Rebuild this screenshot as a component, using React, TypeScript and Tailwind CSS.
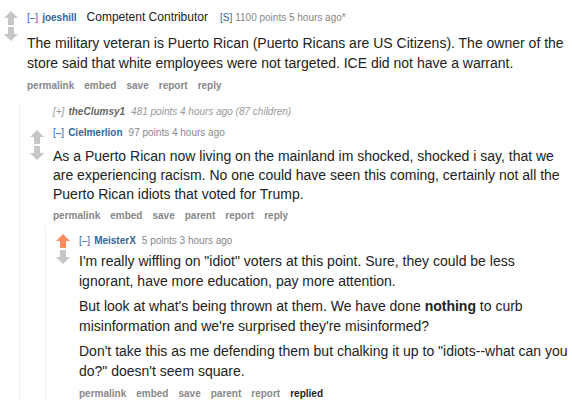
import React from "react";

const sans = "font-['Liberation_Sans',Arial,Helvetica,sans-serif]";

function Arrow({ down, color }: { down?: boolean; color: string }) {
  return (
    <svg width="14" height="14" viewBox="0 0 14 14" className="block">
      {down ? (
        <polygon points="4,0 10,0 10,7 14,7 7,14 0,7 4,7" fill={color} />
      ) : (
        <polygon points="7,0 14,7 10,7 10,14 4,14 4,7 0,7" fill={color} />
      )}
    </svg>
  );
}

function Votes({ upColor = "#c6c6c6", top }: { upColor?: string; top: string }) {
  return (
    <div className={`w-[23px] shrink-0 flex flex-col gap-[2px] ${top}`}>
      <Arrow color={upColor} />
      <Arrow down color="#c6c6c6" />
    </div>
  );
}

function Buttons({ items, replied, mt }: { items: string[]; replied?: boolean; mt: string }) {
  return (
    <ul className={`flex gap-[10px] text-[10px] leading-[14px] font-bold text-[#888] ${mt}`}>
      {items.map((b) => (
        <li key={b}>{b}</li>
      ))}
      {replied && <li className="text-[#222]">replied</li>}
    </ul>
  );
}

export default function App() {
  return (
    <div className={`min-h-screen bg-white text-[#222] ${sans}`}>
      {/* top-level comment */}
      <div className="pl-[4px] pt-[9px]">
        <div className="flex">
          <Votes top="mt-[2px]" />
          <div className="flex-1 pr-[4px]">
            <p className="flex items-baseline text-[10px] leading-[16px] whitespace-nowrap">
              <span className="text-[#369]">[–]</span>
              <span className="ml-[4px] font-bold text-[#369]">joeshill</span>
              <span className="ml-[10px] text-[12px] text-[#222]">Competent Contributor</span>
              <span className="ml-[12px] text-[#369]">[S]</span>
              <span className="ml-[3px] text-[#888]">1100 points 5 hours ago*</span>
            </p>
            <div className="mt-[7px] text-[14px] leading-[20px]">
              <p>
                The military veteran is Puerto Rican (Puerto Ricans are US Citizens). The owner of the store said
                that white employees were not targeted. ICE did not have a warrant.
              </p>
            </div>
            <Buttons items={["permalink", "embed", "save", "report", "reply"]} mt="mt-[6px]" />
          </div>
        </div>

        {/* children */}
        <div className="ml-[15px] mt-[11px] border-l border-dotted border-[#ddf] pl-[10px] pt-[1px]">
          <p className="pl-[23px] text-[10px] leading-[14px] italic text-[#999] whitespace-nowrap">
            <span>[+]</span>
            <span className="ml-[4px] font-bold text-[#666]">theClumsy1</span>
            <span className="ml-[6px]">481 points 4 hours ago (87 children)</span>
          </p>

          <div className="mt-[6px] flex">
            <Votes top="mt-[5px]" />
            <div className="flex-1 pr-[4px]">
              <p className="text-[10px] leading-[16px] whitespace-nowrap">
                <span className="text-[#369]">[–]</span>
                <span className="ml-[4px] font-bold text-[#369]">Cielmerlion</span>
                <span className="ml-[6px] text-[#888]">97 points 4 hours ago</span>
              </p>
              <div className="mt-[6px] text-[14px] leading-[19px]">
                <p>
                  As a Puerto Rican now living on the mainland im shocked, shocked i say, that we are experiencing
                  racism. No one could have seen this coming, certainly not all the Puerto Rican idiots that voted
                  for Trump.
                </p>
              </div>
              <Buttons items={["permalink", "embed", "save", "parent", "report", "reply"]} mt="mt-[5px]" />
            </div>
          </div>

          <div className="ml-[15px] mt-[3px] border-l border-dotted border-[#ddf] pl-[10px] pt-[7px]">
            <div className="flex">
              <Votes upColor="#ff8b60" top="mt-[1px]" />
              <div className="flex-1 pr-[4px]">
                <p className="text-[10px] leading-[16px] whitespace-nowrap">
                  <span className="text-[#369]">[–]</span>
                  <span className="ml-[4px] font-bold text-[#369]">MeisterX</span>
                  <span className="ml-[6px] text-[#888]">5 points 3 hours ago</span>
                </p>
                <div className="mt-[2px] text-[14px] leading-[20px] flex flex-col gap-[5px]">
                  <p>
                    I'm really wiffling on "idiot" voters at this point. Sure, they could be less ignorant, have more
                    education, pay more attention.
                  </p>
                  <p>
                    But look at what's being thrown at them. We have done <strong>nothing</strong> to curb
                    misinformation and we're surprised they're misinformed?
                  </p>
                  <p>
                    Don't take this as me defending them but chalking it up to "idiots--what can you do?" doesn't
                    seem square.
                  </p>
                </div>
                <Buttons items={["permalink", "embed", "save", "parent", "report"]} replied mt="mt-[6px]" />
              </div>
            </div>
          </div>
        </div>
      </div>
    </div>
  );
}
